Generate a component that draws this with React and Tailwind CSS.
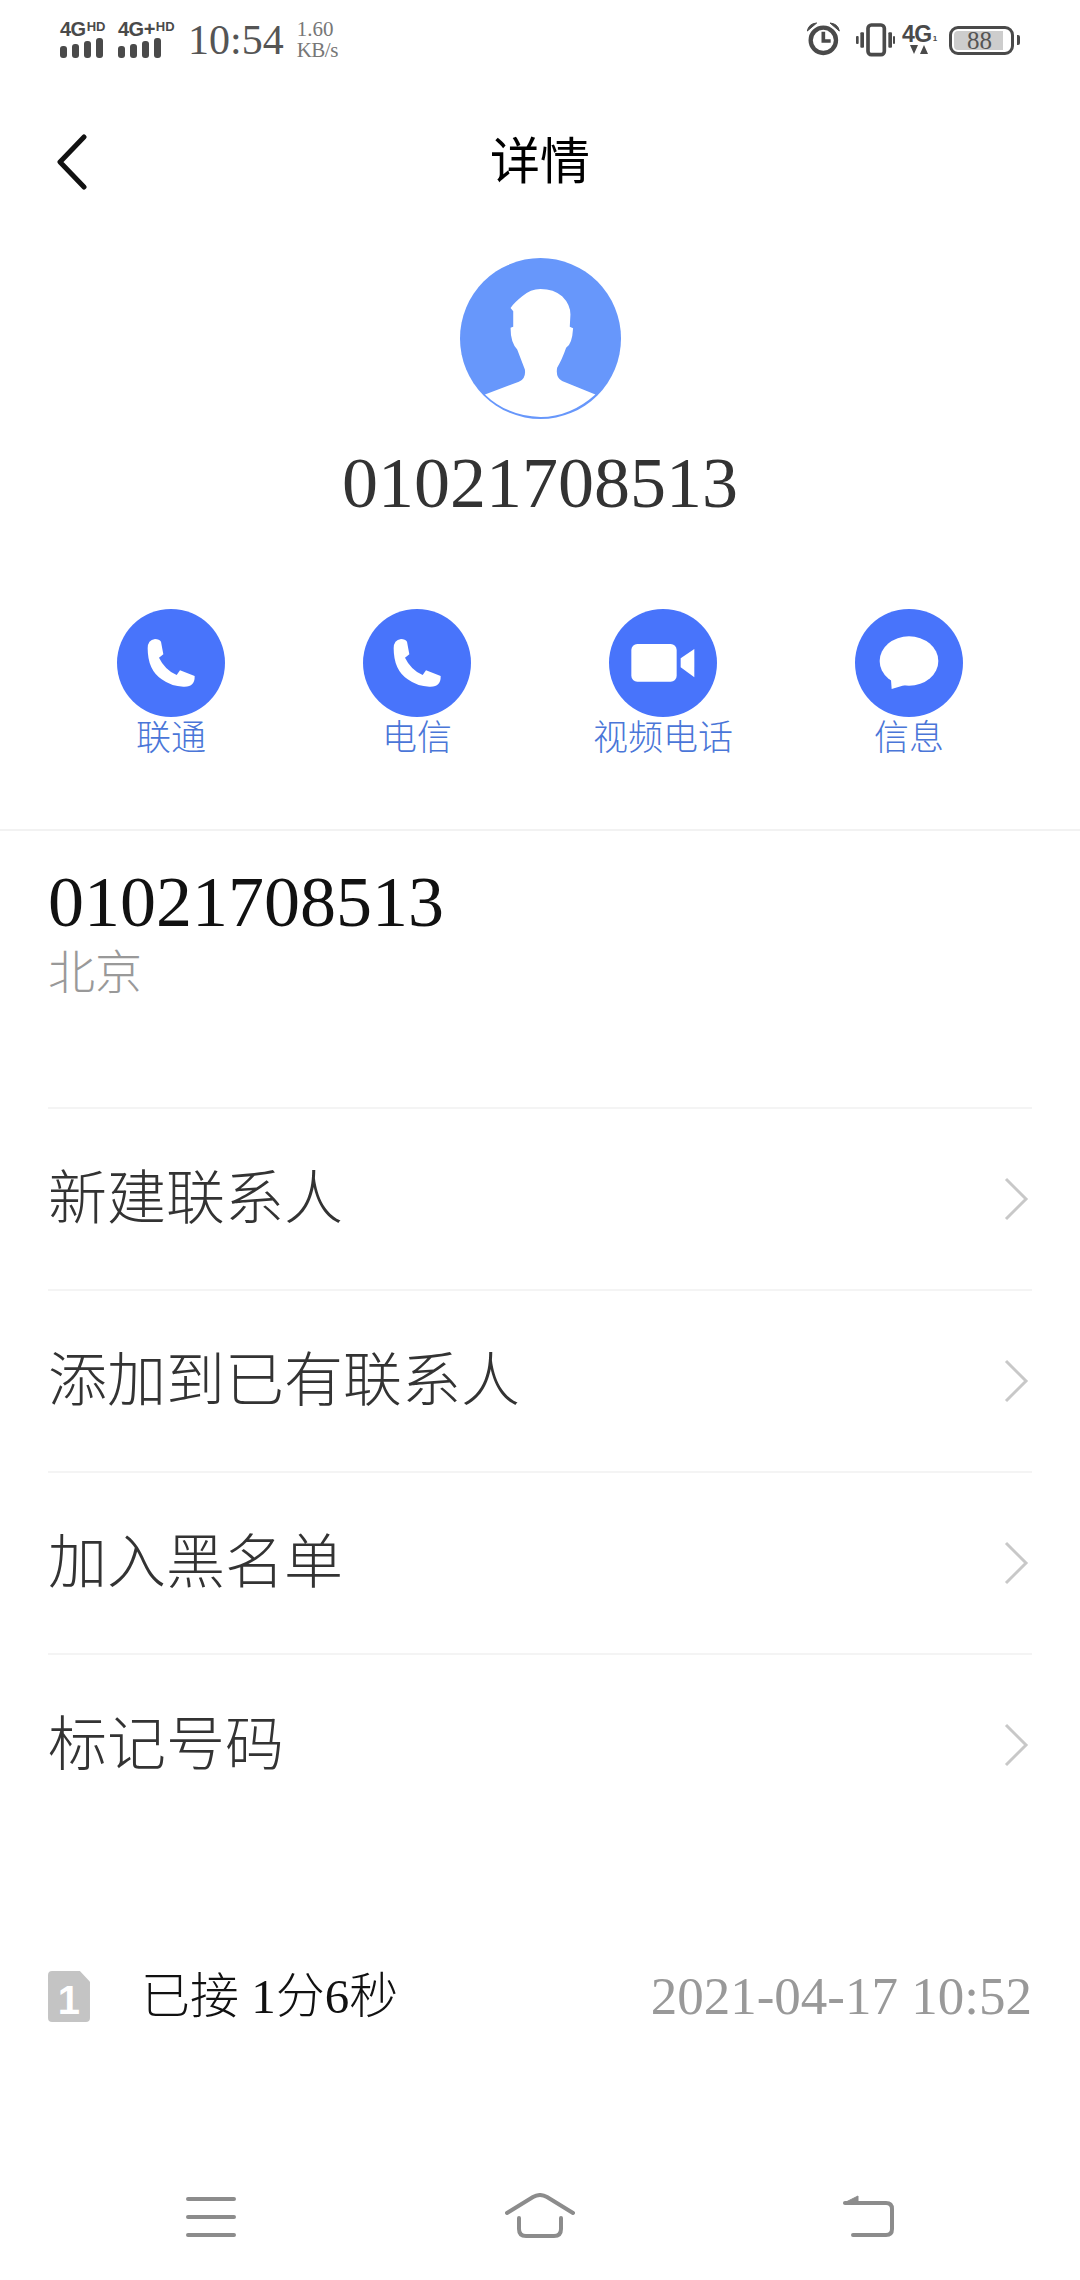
import React from "react";

const serif = "[font-family:'Liberation_Serif','Noto_Sans_CJK_SC',serif]";
const sans = "[font-family:'Liberation_Sans',sans-serif]";

const SignalBars = () => (
  <svg width="44" height="20" viewBox="0 0 44 20" fill="#4a4a4a">
    <rect x="0" y="8" width="7" height="12" rx="3" />
    <rect x="12" y="6" width="7" height="14" rx="3" />
    <rect x="24" y="3" width="7" height="17" rx="3" />
    <rect x="36" y="0" width="7" height="20" rx="3" />
  </svg>
);

const Signal = ({ label, sup, width }) => (
  <div className="flex flex-col" style={{ width }}>
    <div className={`flex items-start h-[16px] leading-none font-bold text-[#4a4a4a] ${sans}`}>
      <span className="text-[20px] leading-[15px] tracking-[-0.5px]">{label}</span>
      <span className="text-[13px] leading-[10px] ml-[1px]">{sup}</span>
    </div>
    <SignalBars />
  </div>
);

const PhoneIcon = () => (
  <svg className="w-[108px] h-[108px]" viewBox="111 57 324 324">
    <circle cx="273" cy="219" r="162" fill="#4874fb" />
    <path
      d="M203 175 Q203 240 245 268 Q275 290 310 290 Q345 292 344 258 L300 241 L290 255 Q255 240 237 203 L250 193 L243 155 Q238 147 225 147 Q203 150 203 175 Z"
      fill="#fff"
    />
  </svg>
);

const VideoIcon = () => (
  <svg className="w-[108px] h-[108px]" viewBox="147 57 324 324">
    <circle cx="309" cy="219" r="162" fill="#4874fb" />
    <rect x="214" y="162" width="136" height="113" rx="18" fill="#fff" />
    <path d="M362 205 L403 177 L403 262 L362 232 Z" fill="#fff" />
  </svg>
);

const MessageIcon = () => (
  <svg className="w-[108px] h-[108px]" viewBox="885 57 324 324">
    <circle cx="1047" cy="219" r="162" fill="#4874fb" />
    <ellipse cx="1047" cy="213" rx="88" ry="74" fill="#fff" />
    <path d="M985 262 L993 270 L995 297 L1035 285 Z" fill="#fff" />
  </svg>
);

const actions = [
  { label: "联通", icon: <PhoneIcon /> },
  { label: "电信", icon: <PhoneIcon /> },
  { label: "视频电话", icon: <VideoIcon /> },
  { label: "信息", icon: <MessageIcon /> },
];

const rows = ["新建联系人", "添加到已有联系人", "加入黑名单", "标记号码"];

const App = () => {
  return (
    <div className={`w-[1080px] h-[2280px] bg-white flex flex-col ${serif}`}>
      {/* status bar */}
      <div className="h-[80px] pl-[60px] pr-[60px] flex items-center justify-between">
        <div className="flex items-center">
          <Signal label="4G" sup="HD" width="58px" />
          <Signal label="4G+" sup="HD" width="70px" />
          <span className="text-[42px] leading-none text-[#555]">10:54</span>
          <div className="ml-[13px] flex flex-col text-[21px] leading-[21px] text-[#777]">
            <span>1.60</span>
            <span className="tracking-[-0.5px]">KB/s</span>
          </div>
        </div>
        <div className="flex items-center">
          <svg width="36" height="36" viewBox="46 43 108 108" fill="none" stroke="#4a4a4a">
            <circle cx="98" cy="98" r="38" strokeWidth="13" />
            <path d="M98 72 V100 H120" strokeWidth="11" />
            <path d="M50 70 Q54 48 78 46 Z M146 70 Q142 48 118 46 Z" fill="#4a4a4a" strokeWidth="3" />
          </svg>
          <svg className="ml-[13px]" width="40" height="36" viewBox="192 43 120 108" fill="#4a4a4a">
            <rect x="231" y="52" width="49" height="89" rx="10" fill="none" stroke="#4a4a4a" strokeWidth="11" />
            <rect x="195" y="85" width="8" height="24" rx="3" />
            <rect x="208" y="74" width="11" height="46" rx="3" />
            <rect x="292" y="74" width="11" height="46" rx="3" />
            <rect x="306" y="85" width="6" height="24" rx="3" />
          </svg>
          <div className="ml-[7px] w-[38px] flex flex-col items-start">
            <div className={`flex items-end h-[17px] font-bold text-[#4a4a4a] ${sans}`}>
              <span className="text-[23px] leading-[17px] tracking-[-0.5px]">4G</span>
              <span className="text-[8px] leading-[9px] ml-[1px]">1</span>
            </div>
            <svg className="ml-[8px] mt-[2px]" width="18" height="9" viewBox="0 0 18 9" fill="#4a4a4a">
              <path d="M0 0 H8 L4 9 Z M10 9 L14 0 L18 9 Z" />
            </svg>
          </div>
          <div className="ml-[9px] flex items-center">
            <div className="relative w-[65px] h-[29px] rounded-[9px] border-[3px] border-[#4a4a4a] p-[2px]">
              <div className="w-[49px] h-[19px] rounded-l-[4px] bg-[#cdcdcd]" />
              <span className="absolute inset-0 flex items-center justify-center pr-[4px] text-[25px] leading-none text-[#555]">
                88
              </span>
            </div>
            <div className="ml-[3px] w-[3px] h-[10px] rounded-r-[2px] bg-[#4a4a4a]" />
          </div>
        </div>
      </div>

      {/* header */}
      <div className="h-[160px] pt-[4px] px-[56px] grid grid-cols-3 items-center">
        <svg width="32" height="56" viewBox="0 0 32 56" fill="none" stroke="#111" strokeWidth="5" strokeLinecap="round" strokeLinejoin="round">
          <path d="M28 3 L4 28 L28 53" />
        </svg>
        <h1 className="col-start-2 text-center text-[50px] leading-none font-normal text-black">详情</h1>
      </div>

      {/* contact */}
      <div className="mt-[18px] flex flex-col items-center">
        <svg className="w-[161px] h-[161px]" viewBox="478 55 484 484">
          <circle cx="720" cy="297" r="242" fill="#6797fb" />
          <path
            d="M553 465 L655 427 Q677 418 673 390 L650 330 Q630 310 630 265 L638 262 L638 215 L630 205 Q640 190 665 170 Q690 148 720 148 Q760 148 785 170 Q810 195 810 225 L808 262 L818 266 Q815 315 797 325 Q785 360 770 385 Q765 415 785 425 L885 465 Q810 532 720 533 Q620 530 553 465 Z"
            fill="#fff"
          />
        </svg>
        <div className="mt-[18px] text-[72px] leading-[92px] text-[#333]">01021708513</div>
      </div>

      {/* actions */}
      <div className="mt-[80px] mx-[48px] grid grid-cols-4">
        {actions.map((item) => (
          <div key={item.label} className="flex flex-col items-center">
            {item.icon}
            <span className="mt-[2px] text-[35px] leading-[40px] font-light text-[#4a76d8]">{item.label}</span>
          </div>
        ))}
      </div>

      {/* number info */}
      <div className="mt-[70px] border-t-2 border-[#f2f2f2] px-[48px] pt-[25px] h-[278px]">
        <div className="text-[72px] leading-[92px] text-[#111]">01021708513</div>
        <div className="text-[47px] leading-[50px] font-light text-[#999]">北京</div>
      </div>

      {/* menu rows */}
      <div className="mx-[48px]">
        {rows.map((text) => (
          <div key={text} className="h-[182px] border-t-2 border-[#f4f4f4] flex items-center justify-between">
            <span className="text-[59px] leading-none font-light text-[#333]">{text}</span>
            <svg className="mr-[3px]" width="25" height="44" viewBox="0 0 25 44" fill="none" stroke="#c8c8c8" strokeWidth="3">
              <path d="M2 2 L22 22 L2 42" />
            </svg>
          </div>
        ))}
      </div>

      {/* call log */}
      <div className="mt-[131px] mx-[48px] h-[60px] flex items-center">
        <svg width="42" height="51" viewBox="85 93 125 152">
          <path
            d="M97 93 H180 L210 125 V233 Q210 245 198 245 H97 Q85 245 85 233 V105 Q85 93 97 93 Z"
            fill="#c4c4c4"
          />
          <text x="147" y="220" textAnchor="middle" fontSize="119" fontWeight="700" fill="#fff" fontFamily="Liberation Sans, sans-serif">
            1
          </text>
        </svg>
        <span className="ml-[51px] text-[49px] leading-none font-light text-[#111]">已接 1分6秒</span>
        <span className="ml-auto text-[53px] leading-none text-[#999]">2021-04-17 10:52</span>
      </div>

      {/* nav bar */}
      <div className="mt-auto h-[120px] pt-[33px] flex items-start justify-between px-[186px]">
        <svg className="mt-[3px]" width="50" height="42" viewBox="0 0 50 42" fill="none" stroke="#8c8c8c" strokeWidth="4" strokeLinecap="round">
          <path d="M2 3 H48 M2 21 H48 M2 39 H48" />
        </svg>
        <svg width="70" height="46" viewBox="0 0 70 46" fill="none" stroke="#8c8c8c" strokeWidth="4" strokeLinecap="round" strokeLinejoin="round">
          <path d="M2 20 L28 4 Q35 0 42 4 L68 20" />
          <path d="M14 25 V36 Q14 43 21 43 H49 Q56 43 56 36 V25" />
        </svg>
        <svg className="mt-[2px]" width="51" height="44" viewBox="0 0 51 44" fill="none" stroke="#8c8c8c" strokeLinecap="round" strokeLinejoin="round">
          <path d="M10 40 H43 Q49 40 49 34 V14 Q49 8 43 8 H2" strokeWidth="4" />
          <path d="M1 8 L15 1 V9 Z" fill="#8c8c8c" strokeWidth="1" />
        </svg>
      </div>
    </div>
  );
};

export default App;
